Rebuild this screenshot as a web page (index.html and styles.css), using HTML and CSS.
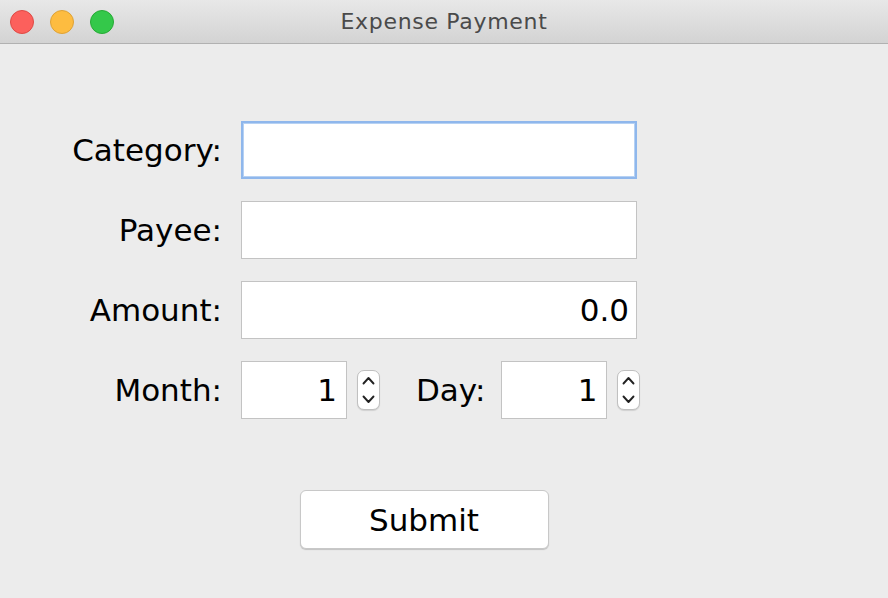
FILE: index.html
```html
<!DOCTYPE html>
<html>
<head>
<meta charset="utf-8">
<link rel="stylesheet" href="styles.css">
</head>
<body>
<div class="window">
  <div class="titlebar">
    <div class="lights">
      <span class="light red"></span>
      <span class="light yellow"></span>
      <span class="light green"></span>
    </div>
    <div class="title">Expense Payment</div>
  </div>
  <div class="content">
    <div class="form">
      <div class="row">
        <label class="label">Category:</label>
        <div class="field wide focused"></div>
      </div>
      <div class="row">
        <label class="label">Payee:</label>
        <div class="field wide"></div>
      </div>
      <div class="row">
        <label class="label">Amount:</label>
        <div class="field wide">0.0</div>
      </div>
      <div class="row">
        <label class="label">Month:</label>
        <div class="spinner-group">
          <div class="field small">1</div>
          <div class="stepper">
            <svg width="23" height="40" viewBox="0 0 23 40"><path d="M6.5 13.5 L11.5 8 L16.5 13.5" fill="none" stroke="#222" stroke-width="1.9" stroke-linecap="round" stroke-linejoin="round"/><path d="M6.5 26.5 L11.5 32 L16.5 26.5" fill="none" stroke="#222" stroke-width="1.9" stroke-linecap="round" stroke-linejoin="round"/></svg>
          </div>
          <label class="label day">Day:</label>
          <div class="field small">1</div>
          <div class="stepper">
            <svg width="23" height="40" viewBox="0 0 23 40"><path d="M6.5 13.5 L11.5 8 L16.5 13.5" fill="none" stroke="#222" stroke-width="1.9" stroke-linecap="round" stroke-linejoin="round"/><path d="M6.5 26.5 L11.5 32 L16.5 26.5" fill="none" stroke="#222" stroke-width="1.9" stroke-linecap="round" stroke-linejoin="round"/></svg>
          </div>
        </div>
      </div>
    </div>
    <div class="actions">
      <button class="button">Submit</button>
    </div>
  </div>
</div>
</body>
</html>
```
FILE: styles.css
```css
html, body {
  margin: 0;
  padding: 0;
  background: #ececec;
}
.window {
  width: 888px;
  height: 598px;
  font-family: "DejaVu Sans", "Noto Sans", sans-serif;
  color: #000;
  overflow: hidden;
}
.titlebar {
  height: 43px;
  background: linear-gradient(#e8e8e8, #d3d3d3);
  border-bottom: 1px solid #b1b1b1;
  display: flex;
  align-items: center;
  position: relative;
}
.lights {
  display: flex;
  gap: 16px;
  padding-left: 10px;
}
.light {
  width: 24px;
  height: 24px;
  border-radius: 50%;
  box-sizing: border-box;
}
.red { background: #fc605c; border: 1px solid #de4a44; }
.yellow { background: #fdbc40; border: 1px solid #dea236; }
.green { background: #34c84a; border: 1px solid #27aa35; }
.title {
  position: absolute;
  left: 0;
  right: 0;
  text-align: center;
  font-size: 22px;
  letter-spacing: 0.7px;
  color: #4a4a4a;
  pointer-events: none;
}
.content {
  padding-top: 77px;
}
.form {
  display: flex;
  flex-direction: column;
  gap: 22px;
}
.row {
  display: flex;
  align-items: center;
  height: 58px;
}
.label {
  width: 241px;
  text-align: right;
  font-size: 31px;
  padding-right: 19px;
  box-sizing: border-box;
  flex: none;
}
.field {
  box-sizing: border-box;
  height: 58px;
  background: #fff;
  border: 1px solid #c3c3c3;
  font-size: 31px;
  text-align: right;
  padding: 0 7px;
  line-height: 56px;
}
.wide {
  width: 396px;
}
.focused {
  border: 2px solid #8fb7ec;
  box-shadow: 0 0 0 1px #b6d1f3 inset;
}
.spinner-group {
  display: flex;
  align-items: center;
}
.small {
  width: 106px;
  padding-right: 9px;
}
.stepper {
  width: 23px;
  height: 40px;
  margin-left: 10px;
  background: #fff;
  border: 1px solid #c0c0c0;
  border-radius: 7px;
  box-sizing: border-box;
  display: flex;
  align-items: center;
  justify-content: center;
  box-shadow: 0 1px 1px rgba(0,0,0,0.12);
}
.stepper svg {
  display: block;
  flex: none;
}
.label.day {
  width: auto;
  padding: 0;
  margin-left: 36px;
  margin-right: 16px;
}
.actions {
  display: flex;
  justify-content: center;
  padding-top: 71px;
}
.button {
  width: 249px;
  height: 59px;
  background: #fff;
  border: 1px solid #c8c8c8;
  border-radius: 6px;
  font-family: "DejaVu Sans", "Noto Sans", sans-serif;
  font-size: 31px;
  color: #000;
  box-shadow: 0 1px 1px rgba(0,0,0,0.18);
  position: relative;
  left: -20px;
}
```
